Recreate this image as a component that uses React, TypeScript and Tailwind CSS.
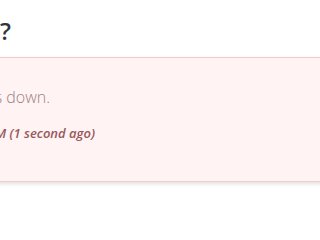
export default function App() {
  return (
    <div className="w-full h-screen overflow-hidden bg-white font-['Open_Sans',sans-serif]">
      <div className="pt-[15px] h-[57px]">
        <div className="w-[11px] flex justify-end whitespace-nowrap">
          <h1 className="text-[24px] leading-[32px] font-semibold text-[#2f3640]">Is it down?</h1>
        </div>
      </div>
      <div className="-mx-[20px] h-[125px] border border-[#f7c9cc] bg-[#fff3f3] shadow-[0_2px_4px_rgba(0,0,0,0.12)] pt-[27px]">
        <div className="ml-[20px] w-[49px] flex justify-end whitespace-nowrap">
          <p className="text-[16px] leading-[24px] font-light text-[#a07f82]">
            It's not just you! The site is down.
          </p>
        </div>
        <div className="ml-[20px] mt-[14px] w-[94px] flex justify-end whitespace-nowrap">
          <p className="text-[13px] leading-[20px] italic font-semibold text-[#98585c]">
            Last checked 10:42:07 AM (1 second ago)
          </p>
        </div>
      </div>
    </div>
  );
}
